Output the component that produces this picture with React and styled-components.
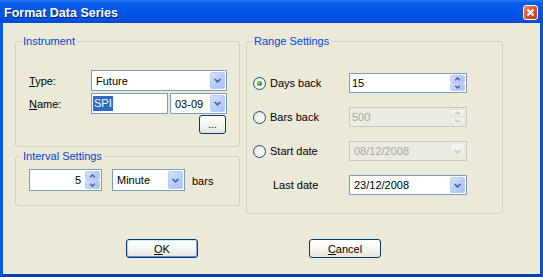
import React from 'react'
import styled, { createGlobalStyle } from 'styled-components'

const GlobalStyle = createGlobalStyle`
  html, body {
    margin: 0;
    padding: 0;
    background: #ece9d8;
  }
  body {
    font-family: "Liberation Sans", Arial, sans-serif;
    font-size: 11px;
    color: #000;
  }
`

const Window = styled.div`
  width: 543px;
  height: 277px;
  display: flex;
  flex-direction: column;
  box-sizing: border-box;
  overflow: hidden;
`

const TitleBar = styled.div`
  height: 23px;
  flex: none;
  display: flex;
  align-items: center;
  justify-content: space-between;
  padding: 2px 5px 0 4px;
  box-sizing: border-box;
  background: linear-gradient(to bottom, #2a7cf4 0%, #0a5fe9 12%, #0257e6 40%, #0054e3 70%, #004bd2 100%);
`

const Title = styled.span`
  color: #fff;
  font-weight: bold;
  font-size: 12.5px;
  text-shadow: 1px 1px 0 #0a1e7a;
`

const CloseButton = styled.div`
  width: 15px;
  height: 15px;
  box-sizing: border-box;
  border: 1px solid #fff;
  border-radius: 3px;
  background: linear-gradient(135deg, #e9896a 0%, #d8572f 50%, #c03b16 100%);
  display: flex;
  align-items: center;
  justify-content: center;
  margin-top: -1px;
`

const Frame = styled.div`
  flex: 1;
  display: flex;
  flex-direction: column;
  background: #ece9d8;
  border: 3px solid #0054e3;
  border-top: none;
  border-left-color: #0058ea;
  border-right-color: #0050dc;
  border-bottom-color: #0043b8;
  padding: 11px 12px 0 12px;
`

const MainRow = styled.div`
  display: flex;
  align-items: flex-start;
  gap: 6px;
`

const LeftColumn = styled.div`
  display: flex;
  flex-direction: column;
  gap: 2px;
  width: 225px;
`

const Group = styled.fieldset`
  margin: 0;
  padding: 0;
  min-width: 0;
  box-sizing: border-box;
  width: ${p => p.$width}px;
  border: 1px solid #d0d0bf;
  border-radius: 3px;
`

const Legend = styled.legend`
  color: #0046d5;
  font-size: 11px;
  line-height: 14px;
  padding: 0 2px;
  margin-left: 5px;
`

const GroupBody = styled.div`
  padding: ${p => p.$pad};
`

const FieldGrid = styled.div`
  display: grid;
  grid-template-columns: 62px 136px;
  row-gap: 2px;
  align-items: center;
`

const Label = styled.span`
  padding-left: ${p => p.$indent || 0}px;
  white-space: nowrap;
`

const NameRow = styled.div`
  display: flex;
  align-items: center;
  gap: 2px;
`

const TextBox = styled.div`
  box-sizing: border-box;
  height: ${p => p.$h || 20}px;
  width: ${p => p.$w}px;
  border: 1px solid #7f9db9;
  background: #fff;
  display: flex;
  align-items: center;
  padding: 0 1px;
`

const Selected = styled.span`
  background: #316ac5;
  color: #fff;
  line-height: 15px;
  padding: 0 1px;
`

const ComboBox = styled.div`
  box-sizing: border-box;
  height: ${p => p.$h || 21}px;
  width: ${p => p.$w}px;
  border: 1px solid ${p => (p.$disabled ? '#c9c7ba' : '#7f9db9')};
  background: ${p => (p.$disabled ? '#ebeae3' : '#fff')};
  color: ${p => (p.$disabled ? '#aca899' : '#000')};
  display: flex;
  align-items: stretch;
  padding: 1px;
`

const ComboText = styled.span`
  flex: 1;
  display: flex;
  align-items: center;
  padding-left: 3px;
  white-space: nowrap;
  overflow: hidden;
`

const DropButton = styled.div`
  width: 15px;
  flex: none;
  box-sizing: border-box;
  border: 1px solid ${p => (p.$disabled ? '#e7e5dc' : '#b9cdf7')};
  border-radius: 2px;
  background: ${p =>
    p.$disabled
      ? 'linear-gradient(#f4f3ee, #ebeae3)'
      : 'linear-gradient(135deg, #d5e2fd 0%, #bcd0fb 45%, #a8c0f6 100%)'};
  display: flex;
  align-items: center;
  justify-content: center;
`

const SpinBox = styled(ComboBox)``

const SpinText = styled.span`
  flex: 1;
  display: flex;
  align-items: center;
  justify-content: ${p => (p.$right ? 'flex-end' : 'flex-start')};
  padding: 0 4px 0 1px;
`

const SpinButtons = styled.div`
  width: 15px;
  flex: none;
  display: flex;
  flex-direction: column;
`

const SpinHalf = styled(DropButton)`
  flex: 1;
`

const IntervalRow = styled.div`
  display: flex;
  align-items: center;
  gap: 10px;
`

const BarsLabel = styled.span`
  margin-left: -3px;
  padding-top: 2px;
`

const DotsRow = styled.div`
  width: 197px;
  display: flex;
  justify-content: flex-end;
  margin-top: 1px;
`

const SmallButton = styled.div`
  width: 27px;
  height: 19px;
  box-sizing: border-box;
  border: 1px solid #003c74;
  border-radius: 3px;
  background: linear-gradient(#fff 0%, #f4f3ef 60%, #e3e0d6 100%);
  display: flex;
  align-items: center;
  justify-content: center;
  font-size: 10px;
  line-height: 1;
`

const RangeGrid = styled.div`
  display: grid;
  grid-template-columns: 96px 118px;
  row-gap: 14px;
  align-items: center;
`

const RadioLabel = styled.div`
  display: flex;
  align-items: center;
  gap: 4px;
  white-space: nowrap;
`

const RadioCircle = styled.div`
  width: 13px;
  height: 13px;
  box-sizing: border-box;
  border-radius: 50%;
  border: 1px solid #1c5180;
  background: radial-gradient(circle at 65% 65%, #fff 0%, #f2f1ea 45%, #dcdbd3 100%);
  display: flex;
  align-items: center;
  justify-content: center;
`

const RadioDot = styled.div`
  width: 5px;
  height: 5px;
  border-radius: 50%;
  background: radial-gradient(circle at 35% 35%, #7ede7c 0%, #21a121 60%, #1a8a1a 100%);
`

const ButtonRow = styled.div`
  display: flex;
  gap: 111px;
  margin: 25px 0 0 111px;
`

const PushButton = styled.div`
  width: 72px;
  height: 19px;
  box-sizing: border-box;
  border: 1px solid #003c74;
  border-radius: 3px;
  background: linear-gradient(#fff 0%, #f6f5f1 55%, #e6e3da 100%);
  box-shadow: ${p => (p.$default ? 'inset 0 1px 0 #cee7ff, inset 0 -1px 0 #6982ee, inset 1px 0 0 #b8d0fb, inset -1px 0 0 #8ba8f2' : 'none')};
  display: flex;
  align-items: center;
  justify-content: center;
`

const Chevron = ({ color = '#4d6185', down = true, size = 9 }) => (
  <svg width={size} height={Math.round(size * 0.6)} viewBox="0 0 9 6">
    <path
      d={down ? 'M1 1.2 L4.5 4.5 L8 1.2' : 'M1 4.8 L4.5 1.5 L8 4.8'}
      fill="none"
      stroke={color}
      strokeWidth="2"
    />
  </svg>
)

const Combo = ({ value, w, h, disabled }) => (
  <ComboBox $w={w} $h={h} $disabled={disabled}>
    <ComboText>{value}</ComboText>
    <DropButton $disabled={disabled}>
      <Chevron color={disabled ? '#c9c7ba' : '#4d6185'} />
    </DropButton>
  </ComboBox>
)

const Spinner = ({ value, w, h = 20, right, disabled }) => (
  <SpinBox $w={w} $h={h} $disabled={disabled}>
    <SpinText $right={right}>{value}</SpinText>
    <SpinButtons>
      <SpinHalf $disabled={disabled}>
        <Chevron down={false} size={7} color={disabled ? '#c9c7ba' : '#4d6185'} />
      </SpinHalf>
      <SpinHalf $disabled={disabled}>
        <Chevron size={7} color={disabled ? '#c9c7ba' : '#4d6185'} />
      </SpinHalf>
    </SpinButtons>
  </SpinBox>
)

const Radio = ({ checked, children }) => (
  <RadioLabel>
    <RadioCircle>{checked && <RadioDot />}</RadioCircle>
    <span>{children}</span>
  </RadioLabel>
)

export default function App() {
  return (
    <Window>
      <GlobalStyle />
      <TitleBar>
        <Title>Format Data Series</Title>
        <CloseButton>
          <svg width="9" height="9" viewBox="0 0 9 9">
            <path d="M1.5 1.5 L7.5 7.5 M7.5 1.5 L1.5 7.5" stroke="#fff" strokeWidth="2" />
          </svg>
        </CloseButton>
      </TitleBar>

      <Frame>
        <MainRow>
          <LeftColumn>
            <Group $width={225}>
              <Legend>Instrument</Legend>
              <GroupBody $pad="22px 0 12px 13px">
                <FieldGrid>
                  <Label><u>T</u>ype:</Label>
                  <Combo value="Future" w={136} />
                  <Label><u>N</u>ame:</Label>
                  <NameRow>
                    <TextBox $w={77} $h={21}><Selected>SPI</Selected></TextBox>
                    <Combo value="03-09" w={57} />
                  </NameRow>
                </FieldGrid>
                <DotsRow>
                  <SmallButton>...</SmallButton>
                </DotsRow>
              </GroupBody>
            </Group>

            <Group $width={225}>
              <Legend>Interval Settings</Legend>
              <GroupBody $pad="6px 0 14px 13px">
                <IntervalRow>
                  <Spinner value="5" w={73} h={22} right />
                  <Combo value="Minute" w={73} h={22} />
                  <BarsLabel>bars</BarsLabel>
                </IntervalRow>
              </GroupBody>
            </Group>
          </LeftColumn>

          <Group $width={257}>
            <Legend>Range Settings</Legend>
            <GroupBody $pad="25px 0 18px 6px">
              <RangeGrid>
                <Radio checked>Days back</Radio>
                <Spinner value="15" w={118} />
                <Radio>Bars back</Radio>
                <Spinner value="500" w={118} disabled />
                <Radio>Start date</Radio>
                <Combo value="08/12/2008" w={118} h={20} disabled />
                <Label $indent={20}>Last date</Label>
                <Combo value="23/12/2008" w={118} h={20} />
              </RangeGrid>
            </GroupBody>
          </Group>
        </MainRow>

        <ButtonRow>
          <PushButton $default><u>O</u>K</PushButton>
          <PushButton><u>C</u>ancel</PushButton>
        </ButtonRow>
      </Frame>
    </Window>
  )
}
